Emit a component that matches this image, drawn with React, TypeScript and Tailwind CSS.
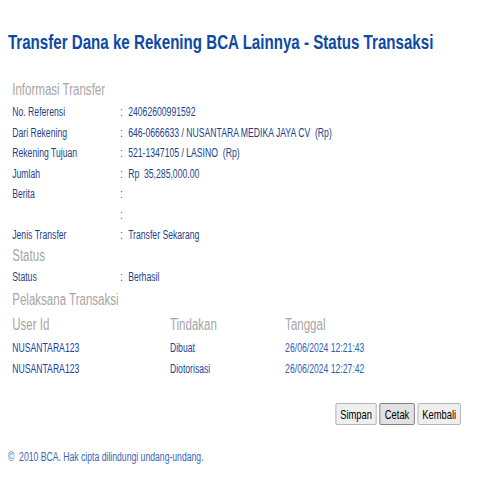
import React from "react";

// The screen is drawn wide and squeezed horizontally, like the original capture.
const font = { fontFamily: '"Liberation Sans", Arial, sans-serif' };

const rows: [string, string][] = [
  ["No. Referensi", "24062600991592"],
  ["Dari Rekening", "646-0666633 / NUSANTARA MEDIKA JAYA CV  (Rp)"],
  ["Rekening Tujuan", "521-1347105 / LASINO  (Rp)"],
  ["Jumlah", "Rp  35,285,000.00"],
  ["Berita", ""],
  ["", ""],
  ["Jenis Transfer", "Transfer Sekarang"],
];

const pelaksana = [
  ["NUSANTARA123", "Dibuat", "26/06/2024 12:21:43"],
  ["NUSANTARA123", "Diotorisasi", "26/06/2024 12:27:42"],
];

function Row({ label, value }: { label: string; value: string }) {
  return (
    <div className="flex h-[20.5px] items-center text-[12px] text-[#1d3f8c]">
      <div className="w-[150px]">{label}</div>
      <div className="w-[11px]">:</div>
      <div className="whitespace-pre">{value}</div>
    </div>
  );
}

export default function App() {
  return (
    <div className="h-[500px] w-[500px] overflow-hidden bg-white">
      <div className="w-[694px] origin-top-left scale-x-[0.72]" style={font}>
        <div className="pl-[11px] pt-[30px]">
          <h1 className="text-[21px] font-bold leading-[24px] text-[#0e4aa5]">
            Transfer Dana ke Rekening BCA Lainnya - Status Transaksi
          </h1>
        </div>

        <div className="pl-[17px] pt-[26px]">
          <div className="flex h-[20px] items-center text-[16px] text-[#a6a6a6]">Informasi Transfer</div>
          <div className="pt-[1.75px]">
            {rows.map(([l, v], i) => (
              <Row key={i} label={l} value={v} />
            ))}
          </div>
          <div className="flex h-[21.5px] items-center text-[16px] text-[#a6a6a6]">Status</div>
          <Row label="Status" value="Berhasil" />
          <div className="flex h-[25.5px] items-center text-[16px] text-[#a6a6a6]">Pelaksana Transaksi</div>
          <div className="flex h-[24.5px] items-center text-[16px] text-[#a6a6a6]">
            <div className="w-[219px]">User Id</div>
            <div className="w-[160px]">Tindakan</div>
            <div>Tanggal</div>
          </div>
          {pelaksana.map(([u, t, d], i) => (
            <div key={i} className="flex h-[21px] items-center text-[12px]">
              <div className="w-[219px] text-[#1a42a3]">{u}</div>
              <div className="w-[160px] text-[#1a42a3]">{t}</div>
              <div className="text-[#2e5fb5]">{d}</div>
            </div>
          ))}
        </div>

        <div className="flex justify-end gap-[4px] pr-[54px] pt-[24px]">
          <button className="h-[22px] w-[57px] rounded-[2px] border border-[#a9a9a9] bg-[#efefef] text-[13px] text-black">
            Simpan
          </button>
          <button className="h-[22px] w-[49px] rounded-[2px] border border-[#6f6f6f] bg-[#e2e2e2] text-[13px] text-black">
            Cetak
          </button>
          <button className="h-[22px] w-[60px] rounded-[2px] border border-[#a9a9a9] bg-[#efefef] text-[13px] text-black">
            Kembali
          </button>
        </div>

        <div className="pl-[11px] pt-[23px] text-[12px] leading-[18px] text-[#3a63b8]">
          © &nbsp;2010 BCA. Hak cipta dilindungi undang-undang.
        </div>
      </div>
    </div>
  );
}
